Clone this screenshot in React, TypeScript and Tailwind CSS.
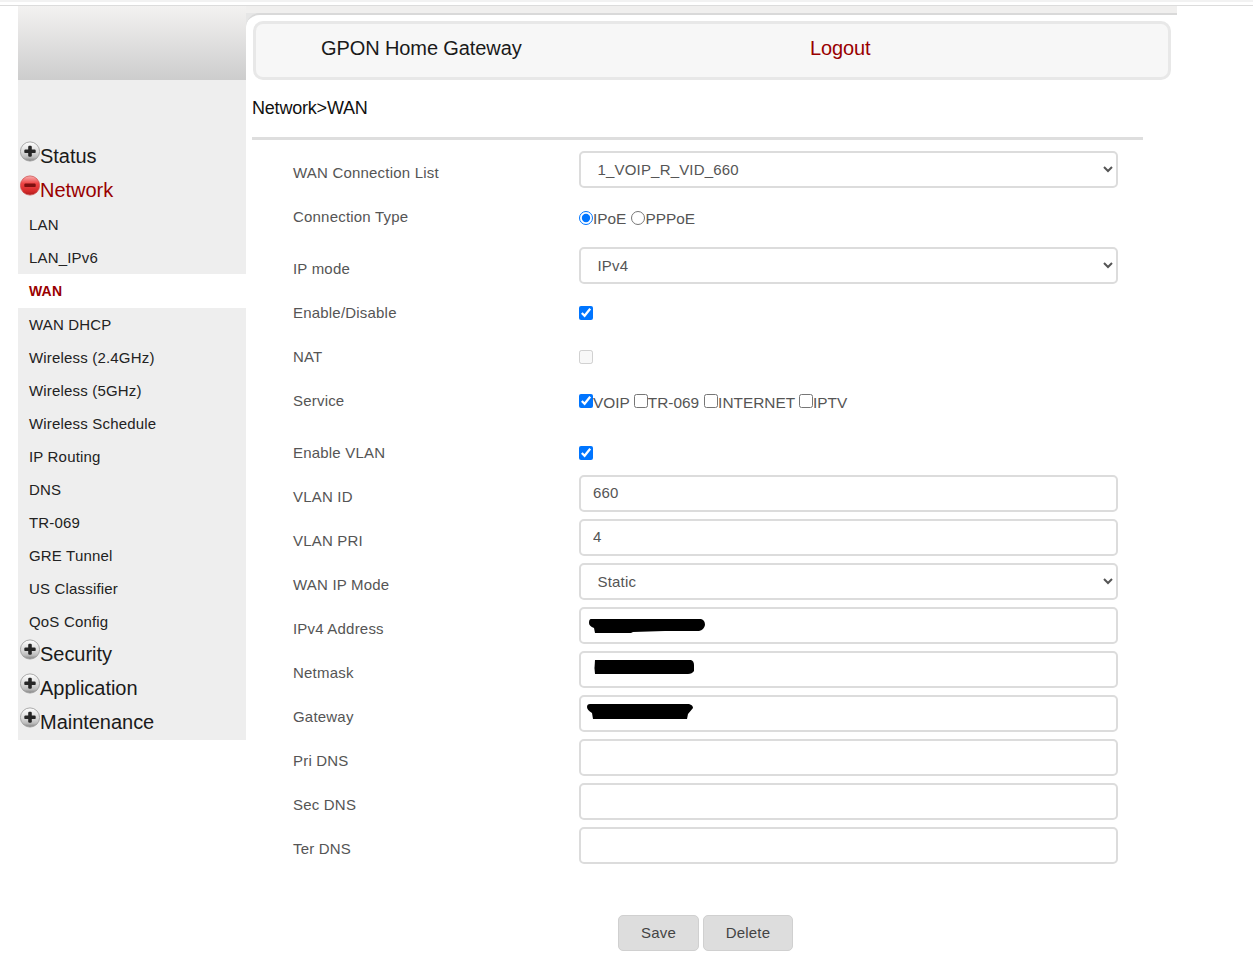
import React from "react";

const font = "font-['Liberation_Sans',Arial,sans-serif]";

function Bullet({ kind }: { kind: "plus" | "minus" }) {
  const red = kind === "minus";
  const id = red ? "bulletRed" : "bulletGray";
  return (
    <svg width="20" height="21" viewBox="0 0 20 21" className="shrink-0">
      <defs>
        <linearGradient id={id} x1="0" y1="0" x2="0" y2="1">
          {red ? (
            <>
              <stop offset="0" stopColor="#f8b0b0" />
              <stop offset="0.4" stopColor="#ee4444" />
              <stop offset="0.8" stopColor="#d42a2a" />
              <stop offset="1" stopColor="#a81c1c" />
            </>
          ) : (
            <>
              <stop offset="0" stopColor="#ffffff" />
              <stop offset="0.55" stopColor="#d8d8d8" />
              <stop offset="0.8" stopColor="#bcbcbc" />
              <stop offset="1" stopColor="#808080" />
            </>
          )}
        </linearGradient>
      </defs>
      <circle cx="10" cy="10.5" r="9.6" fill={`url(#${id})`} stroke={red ? "#d05050" : "#989898"} strokeWidth="0.8" />
      <rect x="4.3" y="8.5" width="11.4" height="3.6" rx="1.2" fill={red ? "#7c1010" : "#262626"} />
      {!red && <rect x="8.2" y="4.8" width="3.6" height="11" rx="1.2" fill="#262626" />}
    </svg>
  );
}

function Group({ label, kind, active }: { label: string; kind: "plus" | "minus"; active?: boolean }) {
  return (
    <div className={`h-[34px] flex items-start text-[20px] leading-[28px] tracking-[-0.03px] ${active ? "text-[#990000]" : "text-[#1a1a1a]"}`}>
      <span className="ml-[2px] -mt-[1px]">
        <Bullet kind={kind} />
      </span>
      <span>{label}</span>
    </div>
  );
}

function SubItem({ label, className = "h-[33px] text-[#222222] text-[15px]" }: { label: string; className?: string }) {
  return <div className={`pl-[11px] flex items-center tracking-[0.18px] ${className}`}>{label}</div>;
}

function Row({ label, children, extra }: { label: string; children: React.ReactNode; extra?: boolean }) {
  return (
    <div className={`flex h-11 ${extra ? "mb-2" : ""}`}>
      <div className="w-[327px] pl-[41px] shrink-0 h-11 flex items-center text-[15px] tracking-[0.2px] text-[#555555]">{label}</div>
      <div className="w-[539px] shrink-0">{children}</div>
    </div>
  );
}

const controlBase =
  "w-[539px] h-[37px] rounded-[5px] border-2 border-[#dcdcdc] bg-white text-[15px] tracking-[0.18px] text-[#555555] outline-none";

function Field({ value, blob }: { value?: string; blob?: React.ReactNode }) {
  return (
    <div className="relative w-[539px] h-[37px]">
      <input readOnly value={value ?? ""} className={`${controlBase} pl-[12px] pr-[12px] pb-[2px] ${font}`} />
      {blob}
    </div>
  );
}

function Pick({ value }: { value: string }) {
  return (
    <select defaultValue={value} className={`${controlBase} pl-[12.5px] pr-[7px] ${font}`}>
      <option>{value}</option>
    </select>
  );
}

function Check({ on, disabled }: { on?: boolean; disabled?: boolean }) {
  return <input type="checkbox" readOnly checked={!!on} disabled={disabled} className="w-[14px] h-[14px] m-0" />;
}

function Blob({ d, left, top, w, h }: { d: string; left: string; top: string; w: number; h: number }) {
  return (
    <svg width={w} height={h} viewBox={`0 0 ${w} ${h}`} className={`absolute ${left} ${top}`}>
      <path d={d} fill="#000000" />
    </svg>
  );
}

export default function App() {
  const subs = [
    "Wireless (2.4GHz)",
    "Wireless (5GHz)",
    "Wireless Schedule",
    "IP Routing",
    "DNS",
    "TR-069",
    "GRE Tunnel",
    "US Classifier",
    "QoS Config",
  ];
  return (
    <div className={`${font} w-[1253px] h-[973px] bg-white overflow-hidden`}>
      <div className="h-[2px] bg-[#f2f2f2]" />
      <div className="h-[3px]" />
      <div className="h-px bg-[#dcdcdc]" />
      <div className="flex ml-[18px] w-[1159px]">
        <aside className="w-[228px] shrink-0">
          <div className="h-[74px] bg-gradient-to-b from-[#f3f2f1] to-[#cdcdcd]" />
          <div className="bg-[#eeeeee] pt-[62px] h-[660px]">
            <Group label="Status" kind="plus" />
            <Group label="Network" kind="minus" active />
            <SubItem label="LAN" className="h-[33px] -mt-px text-[#222222] text-[15px]" />
            <SubItem label="LAN_IPv6" className="h-[32px] text-[#222222] text-[15px]" />
            <SubItem label="WAN" className="h-[34px] bg-white text-[#990000] font-bold text-[14px]" />
            <SubItem label="WAN DHCP" className="h-[33px] mt-px text-[#222222] text-[15px]" />
            {subs.map((s) => (
              <SubItem key={s} label={s} />
            ))}
            <div className="h-px" />
            <Group label="Security" kind="plus" />
            <Group label="Application" kind="plus" />
            <Group label="Maintenance" kind="plus" />
          </div>
        </aside>
        <main className="w-[931px] shrink-0 bg-[#e6e6e6]">
          <div className="bg-[#f0efee] h-[7px]" />
          <div className="bg-white rounded-tl-[14px] border-t-2 border-[#d9d9d9] pl-[6px] pt-[6px]">
            <div className="w-[918px] h-[59px] ml-px rounded-[10px] border-[3px] border-[#e8e8e8] bg-[#f7f7f7] flex items-center text-[20px] tracking-[-0.1px] pb-[6px]">
              <span className="ml-[65px] w-[489px] text-[#1a1a1a]">GPON Home Gateway</span>
              <span className="text-[#990000]">Logout</span>
            </div>
            <div className="h-[57px] flex items-center text-[18px] tracking-[-0.2px] text-[#111111]">Network&gt;WAN</div>
            <div className="w-[891px] h-[3px] bg-[#dedede] mb-[11px]" />
            <Row label="WAN Connection List">
              <Pick value="1_VOIP_R_VID_660" />
            </Row>
            <Row label="Connection Type" extra>
              <div className="h-11 flex items-center text-[15.4px] text-[#555555] pt-[4px]">
                <input type="radio" readOnly checked className="w-[14px] h-[14px] m-0 -mt-[3px]" />
                <span>IPoE</span>
                <input type="radio" readOnly checked={false} className="w-[14px] h-[14px] m-0 ml-[5px] -mt-[3px]" />
                <span>PPPoE</span>
              </div>
            </Row>
            <Row label="IP mode">
              <Pick value="IPv4" />
            </Row>
            <Row label="Enable/Disable">
              <div className="h-11 flex items-center">
                <Check on />
              </div>
            </Row>
            <Row label="NAT">
              <div className="h-11 flex items-center">
                <Check disabled />
              </div>
            </Row>
            <Row label="Service" extra>
              <div className="h-11 flex items-center text-[15.4px] text-[#555555] pt-[4px]">
                <span className="-mt-[4px] flex"><Check on /></span>
                <span>VOIP</span>
                <span className="-mt-[4px] ml-[4px] flex"><Check /></span>
                <span>TR-069</span>
                <span className="-mt-[4px] ml-[5px] flex"><Check /></span>
                <span>INTERNET</span>
                <span className="-mt-[4px] ml-[4px] flex"><Check /></span>
                <span>IPTV</span>
              </div>
            </Row>
            <Row label="Enable VLAN">
              <div className="h-11 flex items-center">
                <Check on />
              </div>
            </Row>
            <Row label="VLAN ID">
              <Field value="660" />
            </Row>
            <Row label="VLAN PRI">
              <Field value="4" />
            </Row>
            <Row label="WAN IP Mode">
              <Pick value="Static" />
            </Row>
            <Row label="IPv4 Address">
              <Field
                blob={
                  <Blob
                    left="left-[10px]"
                    top="top-[12px]"
                    w={116}
                    h={14}
                    d="M2 0 L112 0 Q116 1 116 6 Q115 11 110 12 L76 12 L44 13 L42 14 L6 14 L5 9 Q0 7 0 4 Q0 0 2 0 Z"
                  />
                }
              />
            </Row>
            <Row label="Netmask">
              <Field
                blob={
                  <Blob
                    left="left-[15px]"
                    top="top-[9px]"
                    w={100}
                    h={14}
                    d="M1 0 L97 0 Q100 1 100 5 L100 11 Q98 14 94 14 L1 14 Q0 8 1 0 Z"
                  />
                }
              />
            </Row>
            <Row label="Gateway">
              <Field
                blob={
                  <Blob
                    left="left-[8px]"
                    top="top-[9px]"
                    w={106}
                    h={15}
                    d="M3 0 L102 0 Q106 1 106 4 L101 10 L100 15 L6 15 L5 9 Q0 6 0 3 Q0 0 3 0 Z"
                  />
                }
              />
            </Row>
            <Row label="Pri DNS">
              <Field />
            </Row>
            <Row label="Sec DNS">
              <Field />
            </Row>
            <Row label="Ter DNS">
              <Field />
            </Row>
            <div className="flex gap-[4px] ml-[366px] mt-[44px]">
              <button className="w-[81px] h-[36px] rounded-[5px] border border-[#d0d0d0] bg-[#dddddd] text-[15px] tracking-[0.15px] text-[#444444]">
                Save
              </button>
              <button className="w-[90px] h-[36px] rounded-[5px] border border-[#d0d0d0] bg-[#dddddd] text-[15px] tracking-[0.15px] text-[#444444]">
                Delete
              </button>
            </div>
          </div>
        </main>
      </div>
    </div>
  );
}
